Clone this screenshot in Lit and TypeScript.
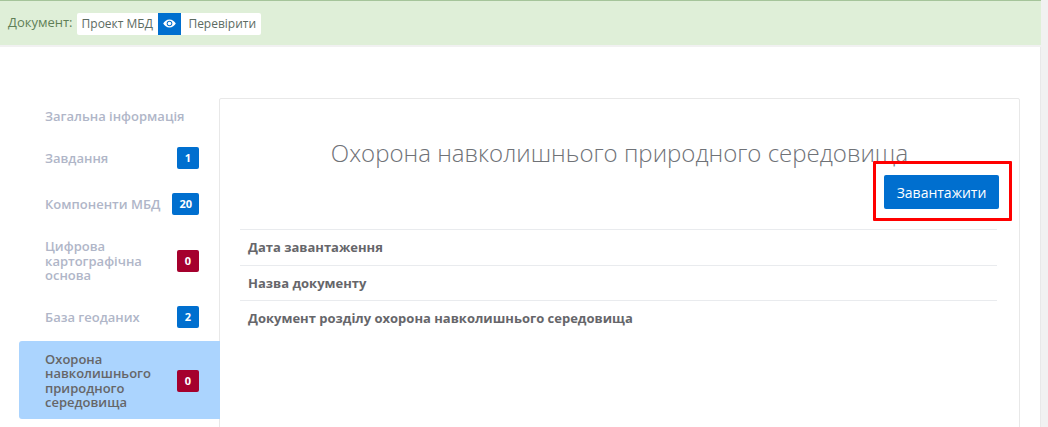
import {LitElement, html, css} from 'lit';
import {customElement} from 'lit/decorators.js';

const menu = [
  {label: 'Загальна інформація'},
  {label: 'Завдання', count: 1, tone: 'blue'},
  {label: 'Компоненти МБД', count: 20, tone: 'blue'},
  {label: 'Цифрова картографічна основа', count: 0, tone: 'red'},
  {label: 'База геоданих', count: 2, tone: 'blue'},
  {label: 'Охорона навколишнього природного середовища', count: 0, tone: 'red', active: true},
];

const fields = ['Дата завантаження', 'Назва документу', 'Документ розділу охорона навколишнього середовища'];

@customElement('app-root')
export class AppRoot extends LitElement {
  static override styles = css`
    * {
      box-sizing: border-box;
    }

    :host {
      display: block;
      height: 427px;
      overflow: hidden;
      background: #f1f1f1;
      font-family: "Open Sans", sans-serif;
    }

    .page {
      width: 1041px;
      height: 427px;
      overflow: hidden;
    }

    .topbar {
      display: flex;
      align-items: center;
      height: 45px;
      padding: 1px 0 0 8px;
      background: #dfefd8;
      border-top: 1px solid #a5c49a;
      font-size: 13px;
      color: #5f7f57;
    }

    .doc-label {
      margin: 0 4px 3px 0;
    }

    .chips {
      display: flex;
      align-items: center;
      height: 22px;
      background: #fff;
      border-radius: 2px;
      font-size: 12px;
      color: #5c6b62;
    }

    .chip-text {
      padding: 0 5.5px 0 5px;
    }

    .chip-text.last {
      padding: 0 4.5px 0 7px;
    }

    .eye {
      display: flex;
      align-items: center;
      justify-content: center;
      width: 23px;
      height: 22px;
      background: #006fcf;
    }

    .main {
      display: flex;
      align-items: flex-start;
      height: 380px;
      margin-top: 2px;
      padding: 51px 0 0 19px;
      background: #fff;
      border-right: 1px solid #e8e8e8;
    }

    .side {
      display: flex;
      flex-direction: column;
      gap: 2px;
      width: 200px;
      flex: none;
    }

    .item {
      display: flex;
      align-items: center;
      justify-content: space-between;
      gap: 8px;
      padding: 11px 20px 11px 26px;
      font-size: 13px;
      line-height: 14.3px;
      font-weight: 600;
      color: #b0b6c8;
      border-radius: 3px 0 0 3px;
    }

    .item.active {
      position: relative;
      z-index: 1;
      margin-right: -1px;
      padding: 11px 21px 10px 26px;
      background: #abd4fe;
      color: #666668;
    }

    .item-label {
      min-width: 0;
    }

    .badge {
      flex: none;
      min-width: 22px;
      height: 22px;
      padding: 0 7px;
      line-height: 22px;
      text-align: center;
      font-size: 11px;
      font-weight: 700;
      color: #fff;
      border-radius: 2px;
    }

    .badge.blue {
      background: #006fcf;
    }

    .badge.red {
      background: #a5002d;
    }

    .card {
      position: relative;
      width: 801px;
      height: 340px;
      flex: none;
      padding: 0 20px;
      border: 1px solid #e8e8e8;
      border-radius: 2px;
    }

    h1 {
      margin: 37px 0 0;
      text-align: center;
      font-size: 24px;
      line-height: 33px;
      font-weight: 300;
      color: #6f7277;
    }

    .actions {
      display: flex;
      justify-content: flex-end;
      margin-top: 6px;
    }

    button {
      width: 115px;
      height: 34px;
      border: none;
      border-radius: 2px;
      background: #006fcf;
      color: #fff;
      font: 400 14px "Open Sans", sans-serif;
    }

    .rows {
      margin: 20px 2px 0 0;
    }

    .row {
      height: 35.5px;
      padding: 0 8px;
      border-top: 1px solid #e9ebee;
      font-size: 13px;
      line-height: 35px;
      font-weight: 700;
      color: #66666a;
    }

    .mark {
      position: absolute;
      left: 653px;
      top: 62px;
      width: 139px;
      height: 60px;
      border: 3px solid #f00;
      border-radius: 1px;
    }
  `;

  override render() {
    return html`
      <div class="page">
        <div class="topbar">
          <span class="doc-label">Документ:</span>
          <div class="chips">
            <span class="chip-text">Проект МБД</span>
            <span class="eye">
              <svg width="13" height="9" viewBox="0 0 14 10">
                <path fill="#fff" fill-rule="evenodd" d="M7 .5C3.900.5 1.400 2.500 0 5c1.400 2.500 3.900 4.500 7 4.500s5.600-2 7-4.500C12.600 2.500 10.100.5 7 .5zM7 2c1.800 0 3.200 1.300 3.200 3S8.800 8 7 8 3.800 6.700 3.800 5 5.200 2 7 2z"/>
                <circle fill="#fff" cx="7" cy="5" r="2"/>
              </svg>
            </span>
            <span class="chip-text last">Перевірити</span>
          </div>
        </div>
        <div class="main">
          <nav class="side">
            ${menu.map(item => html`
              <div class="item ${item.active ? 'active' : ''}">
                <span class="item-label">${item.label}</span>
                ${item.count !== undefined ? html`<span class="badge ${item.tone}">${item.count}</span>` : ''}
              </div>
            `)}
          </nav>
          <section class="card">
            <h1>Охорона навколишнього природного середовища</h1>
            <div class="actions"><button>Завантажити</button></div>
            <div class="rows">
              ${fields.map(name => html`<div class="row">${name}</div>`)}
            </div>
            <div class="mark"></div>
          </section>
        </div>
      </div>
    `;
  }
}

declare global {
  interface HTMLElementTagNameMap {
    'app-root': AppRoot;
  }
}
